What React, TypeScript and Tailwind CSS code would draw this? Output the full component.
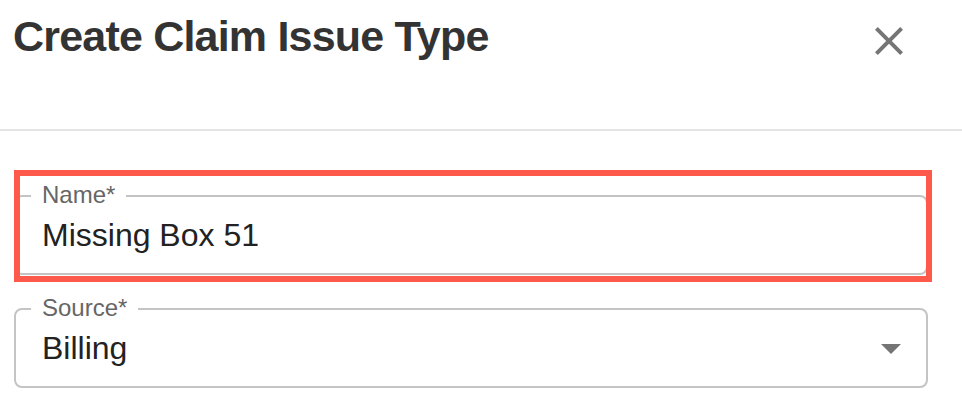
import React from 'react'

const Field = ({ label, value, select }: { label: string; value: string; select?: boolean }) => (
  <div className="relative h-[80px] w-[914px] rounded-[8px] border-2 border-[#c4c4c4] flex items-center pl-[26px]">
    <span className="absolute left-[15px] top-[-14px] px-[11px] bg-white text-[24px] leading-none text-[#666]">
      {label}
    </span>
    <span className="flex-1 text-[32px] leading-none text-[#222]">{value}</span>
    {select && (
      <svg className="mr-[11px] h-12 w-12" viewBox="0 0 24 24" fill="#757575">
        <path d="M7 10l5 5 5-5z" />
      </svg>
    )}
  </div>
)

export default function App() {
  return (
    <div className="w-[962px] h-[400px] overflow-hidden bg-white font-['Liberation_Sans',Arial,sans-serif]">
      <div className="flex h-[129px] items-start justify-between pl-[13px] pr-[49px]">
        <h1 className="mt-[15px] text-[43px] font-bold leading-none tracking-[-0.8px] text-[#333]">
          Create Claim Issue Type
        </h1>
        <button className="mt-[17px] h-12 w-12">
          <svg className="h-12 w-12" viewBox="0 0 24 24" fill="#757575">
            <path d="M19 6.41 17.59 5 12 10.59 6.41 5 5 6.41 10.59 12 5 17.59 6.41 19 12 13.41 17.59 19 19 17.59 13.41 12z" />
          </svg>
        </button>
      </div>
      <div className="h-[2px] bg-[#e4e4e4]" />
      <div className="relative flex flex-col gap-[33px] px-[14px] pt-[64px]">
        <Field label="Name*" value="Missing Box 51" />
        <Field label="Source*" value="Billing" select />
        <div className="pointer-events-none absolute left-[14px] top-[39px] h-[112px] w-[918px] border-[6px] border-[#fd5a4b]" />
      </div>
    </div>
  )
}
